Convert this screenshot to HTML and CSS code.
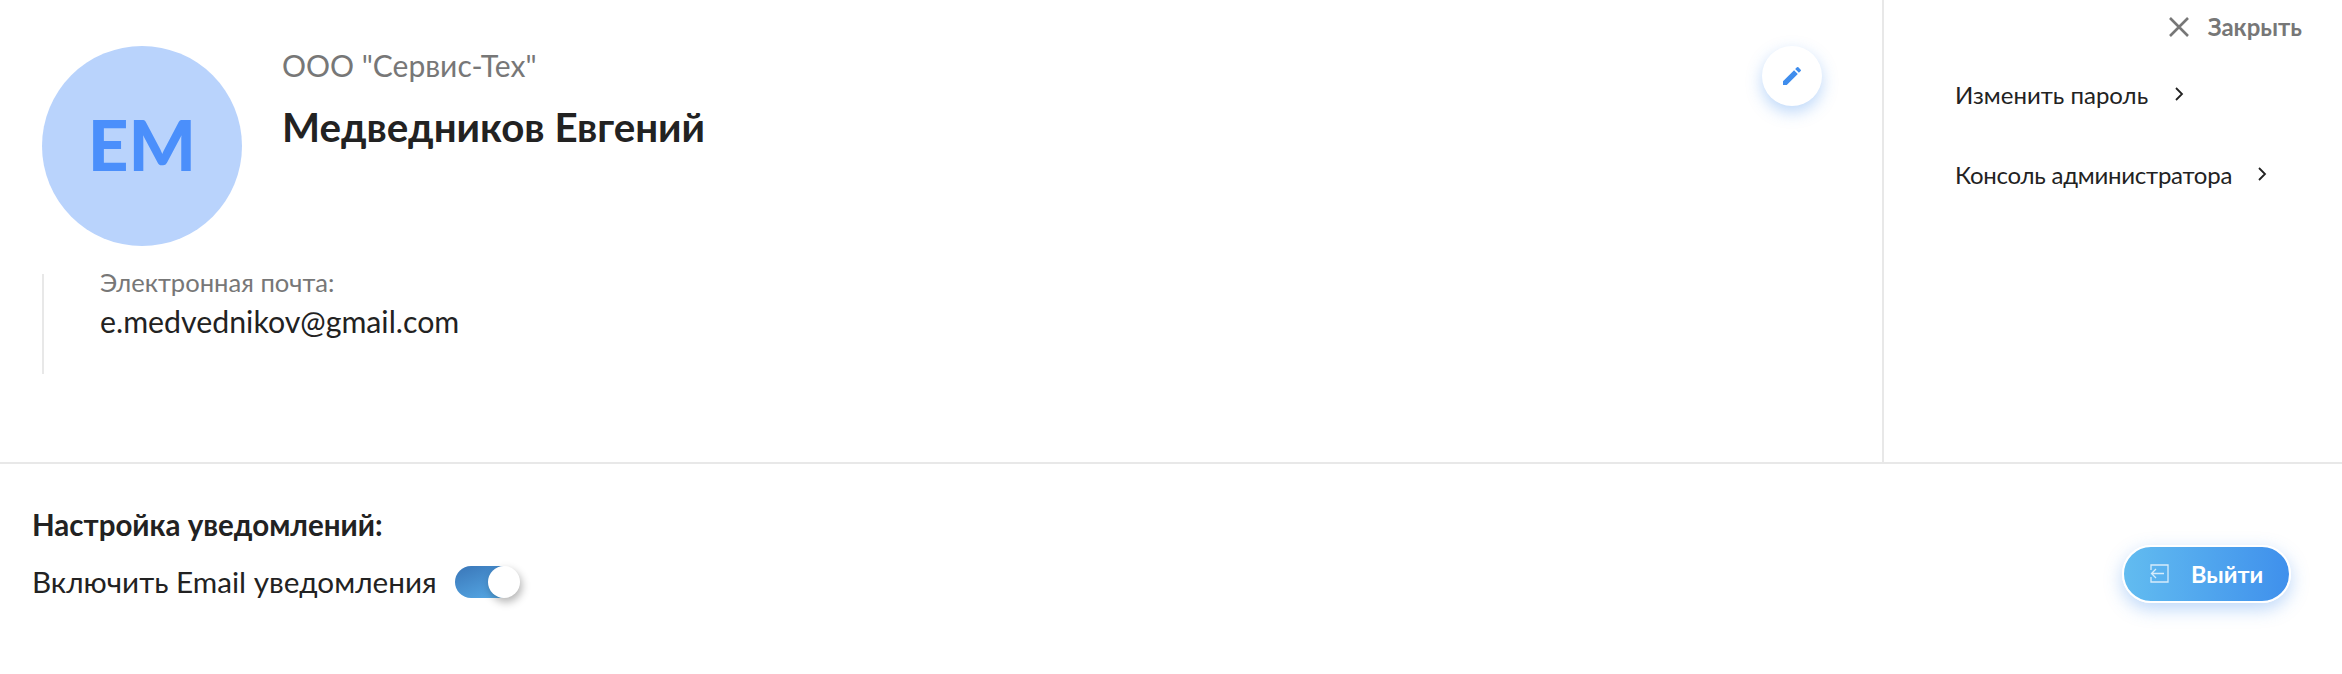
FILE: index.html
```html
<!DOCTYPE html>
<html lang="en">
<head>
  <meta charset="UTF-8">
  <title>Профиль</title>
  <link rel="stylesheet" href="styles.css">
</head>
<body>

  <!-- Profile + side menu -->
  <div class="top">
    <div class="profile">
      <div class="profile-head">
        <div class="avatar">ЕМ</div>
        <div class="names">
          <div class="company">ООО "Сервис-Тех"</div>
          <div class="fullname">Медведников Евгений</div>
        </div>
        <div class="edit-btn">
          <svg width="24" height="24" viewBox="0 0 24 24"><path fill="#3f8ded" d="M3 17.25V21h3.750L17.810 9.940l-3.750-3.750L3 17.250zM20.710 7.040a1 1 0 0 0 0-1.410l-2.340-2.340a1 1 0 0 0-1.410 0l-1.830 1.830 3.750 3.750 1.830-1.830z"/></svg>
        </div>
      </div>
      <div class="contact">
        <div class="contact-label">Электронная почта:</div>
        <div class="contact-value">e.medvednikov@gmail.com</div>
      </div>
    </div>

    <div class="side">
      <div class="close">
        <svg width="22" height="22" viewBox="0 0 22 22"><path d="M2 2l18 18M20 2L2 20" stroke="#777" stroke-width="2.600" fill="none"/></svg>
        <span>Закрыть</span>
      </div>
      <div class="side-link link-first">Изменить пароль
        <svg width="10" height="16" viewBox="0 0 10 16"><path d="M2 2l6 6-6 6" stroke="#222" stroke-width="1.800" fill="none"/></svg>
      </div>
      <div class="side-link link-second">Консоль администратора
        <svg width="10" height="16" viewBox="0 0 10 16"><path d="M2 2l6 6-6 6" stroke="#222" stroke-width="1.800" fill="none"/></svg>
      </div>
    </div>
  </div>

  <!-- Notifications -->
  <div class="bottom">
    <div class="settings">
      <div class="settings-title">Настройка уведомлений:</div>
      <div class="settings-row">
        <span>Включить Email уведомления</span>
        <div class="toggle"><div class="knob"></div></div>
      </div>
    </div>
    <div class="logout">
      <svg width="20" height="20" viewBox="0 0 20 20"><path d="M1 5V1h17v17H1v-4M1 5v1M1 14v-1M14 9.500H2M6 5l-4.500 4.500L6 14" stroke="#d6ecfb" stroke-width="1.300" fill="none"/></svg>
      <span>Выйти</span>
    </div>
  </div>

</body>
</html>
```

FILE: styles.css
```css
body {
  margin: 0;
  background-color: white;
  color: #222;
  font-family: "Lato", "Open Sans", sans-serif;
  height: 674px;
  overflow: hidden;
}

.top {
  display: flex;
  height: 462px;
  border-bottom: 2px solid #e8e8e8;
}

.profile {
  border-right: 2px solid #e8e8e8;
  padding: 46px 0 0 42px;
  box-sizing: border-box;
  width: 1884px;
}

.profile-head {
  display: flex;
}

.avatar {
  width: 200px;
  height: 200px;
  box-sizing: border-box;
  padding-bottom: 5px;
  border-radius: 50%;
  background-color: #b9d3fc;
  color: #4b8ffb;
  font-size: 71px;
  font-weight: 900;
  display: flex;
  align-items: center;
  justify-content: center;
  flex-shrink: 0;
}

.names {
  margin-left: 40px;
  flex: 1;
}

.company {
  color: #777;
  font-size: 30px;
  line-height: 36px;
  margin-top: 1px;
}

.fullname {
  font-size: 40.300px;
  line-height: 48px;
  font-weight: 700;
  margin-top: 20px;
}

.edit-btn {
  width: 60px;
  height: 60px;
  border-radius: 50%;
  background-color: white;
  box-shadow: 0 6px 16px rgba(63, 141, 237, 0.35);
  display: flex;
  align-items: center;
  justify-content: center;
  margin: 0 60px 0 0;
}

.contact {
  border-left: 2px solid #e8e8e8;
  margin-top: 28px;
  height: 100px;
  padding-left: 56px;
  box-sizing: border-box;
}

.contact-label {
  color: #777;
  font-size: 25.600px;
  line-height: 16px;
}

.contact-value {
  font-size: 30.300px;
  line-height: 36px;
  margin-top: 13px;
}

.side {
  flex: 1;
  padding: 0 40px 0 71px;
}

.close {
  display: flex;
  justify-content: flex-end;
  align-items: center;
  gap: 18px;
  color: #777;
  font-size: 24px;
  font-weight: 700;
  margin-top: 12px;
}

.side-link {
  display: flex;
  align-items: center;
  font-size: 24px;
  height: 30px;
  margin-top: 50px;
}

.link-first {
  gap: 26px;
  margin-top: 38px;
}

.link-second {
  gap: 25px;
  letter-spacing: -0.25px;
}

.bottom {
  display: flex;
  justify-content: space-between;
  align-items: flex-start;
  padding: 43px 51px 0 32px;
}

.settings-title {
  font-size: 29.500px;
  line-height: 36px;
  font-weight: 700;
}

.settings-row {
  display: flex;
  align-items: center;
  gap: 18px;
  font-size: 29.700px;
  line-height: 36px;
  margin-top: 21px;
}

.toggle {
  width: 60px;
  height: 32px;
  border-radius: 16px;
  background: linear-gradient(160deg, #3a76b8, #58aeea);
  position: relative;
}

.knob {
  position: absolute;
  right: -5px;
  top: 0;
  width: 32px;
  height: 32px;
  border-radius: 50%;
  background-color: white;
  box-shadow: 2px 4px 8px rgba(0, 0, 0, 0.3);
}

.logout {
  display: flex;
  align-items: center;
  gap: 21px;
  width: 169px;
  height: 58px;
  box-sizing: border-box;
  margin-top: 38px;
  padding-left: 26px;
  border-radius: 29px;
  border: 2px solid white;
  background: linear-gradient(90deg, #62bcf0, #3f90ec);
  box-shadow: 0 6px 18px rgba(63, 141, 237, 0.35);
  color: white;
  font-size: 23.500px;
  font-weight: 700;
}
```
